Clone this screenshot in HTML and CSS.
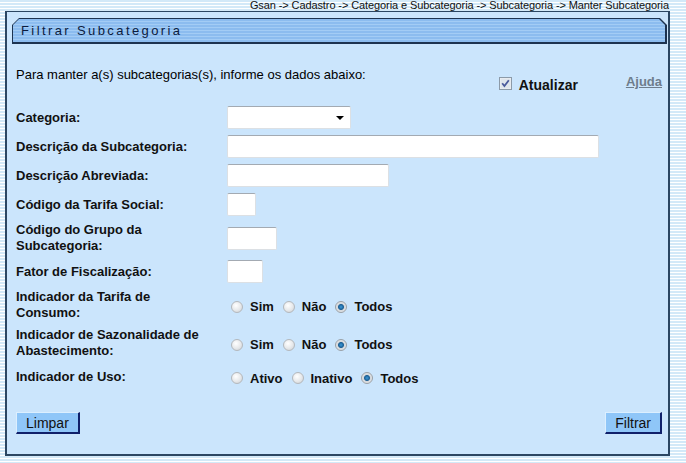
FILE: index.html
```html
<!DOCTYPE html>
<html lang="pt">
<head>
  <meta charset="UTF-8" />
  <title>Filtrar Subcategoria</title>
  <link rel="stylesheet" href="styles.css">
</head>
<body>

  <!-- Caminho -->
  <div class="breadcrumb">Gsan -&gt; Cadastro -&gt; Categoria e Subcategoria -&gt; Subcategoria -&gt; Manter Subcategoria</div>

  <div class="panel">
    <div class="title-bar">
      <div class="title-inner">Filtrar Subcategoria</div>
    </div>

    <div class="intro-row">
      <p class="intro">Para manter a(s) subcategorias(s), informe os dados abaixo:</p>
      <label class="update">
        <svg class="check" width="13" height="13" viewBox="0 0 13 13">
          <rect x="0.5" y="0.5" width="12" height="12" fill="#eef1f5" stroke="#8c9aa8" />
          <rect x="1.5" y="1.5" width="10" height="10" fill="#dfe5ec" />
          <path d="M3.2 6.3 L5.4 9 L9.8 3.2" fill="none" stroke="#4a5a9c" stroke-width="1.8" />
        </svg>
        Atualizar
      </label>
      <a class="help" href="#">Ajuda</a>
    </div>

    <div class="form">
      <label>Categoria:</label>
      <div>
        <span class="select-wrap">
          <select class="field select"><option></option></select>
          <span class="arrow"></span>
        </span>
      </div>

      <label>Descrição da Subcategoria:</label>
      <div><input class="field w-desc" type="text"></div>

      <label>Descrição Abreviada:</label>
      <div><input class="field w-abrev" type="text"></div>

      <label>Código da Tarifa Social:</label>
      <div><input class="field w-tarifa" type="text"></div>

      <label>Código do Grupo da Subcategoria:</label>
      <div><input class="field w-grupo" type="text"></div>

      <label>Fator de Fiscalização:</label>
      <div><input class="field w-fator" type="text"></div>

      <label>Indicador da Tarifa de Consumo:</label>
      <div class="radios">
        <input type="radio" name="tarifa"><span>Sim</span>
        <input type="radio" name="tarifa"><span>Não</span>
        <input type="radio" name="tarifa" checked><span>Todos</span>
      </div>

      <label>Indicador de Sazonalidade de Abastecimento:</label>
      <div class="radios">
        <input type="radio" name="sazonal"><span>Sim</span>
        <input type="radio" name="sazonal"><span>Não</span>
        <input type="radio" name="sazonal" checked><span>Todos</span>
      </div>

      <label>Indicador de Uso:</label>
      <div class="radios">
        <input type="radio" name="uso"><span>Ativo</span>
        <input type="radio" name="uso"><span>Inativo</span>
        <input type="radio" name="uso" checked><span>Todos</span>
      </div>
    </div>

    <div class="buttons">
      <button class="btn" type="button">Limpar</button>
      <button class="btn" type="button">Filtrar</button>
    </div>
  </div>

</body>
</html>
```

FILE: styles.css
```css
* {
  margin: 0;
  padding: 0;
  box-sizing: border-box;
}

body {
  font-family: "Liberation Sans", Arial, sans-serif;
  color: #000;
  background: repeating-linear-gradient(to bottom, #d3e9f8 0, #d3e9f8 2px, #ffffff 2px, #ffffff 3px);
  height: 463px;
  overflow: hidden;
}

.breadcrumb {
  font-family: "Liberation Sans Narrow", "Liberation Sans", Arial, sans-serif;
  font-size: 11px;
  line-height: 11px;
  height: 11px;
  text-align: right;
  padding-right: 17px;
  letter-spacing: -0.1px;
  color: #111;
}

.panel {
  width: 665px;
  height: 445px;
  margin-left: 5px;
  background: #cbe5fc;
  border: 2px solid #2b4662;
  border-top-width: 1px;
  padding: 6px 1px 0 5px;
  display: flex;
  flex-direction: column;
}

/* barra do titulo com cantos cortados */
.title-bar {
  height: 26px;
  background: #1d3350;
  padding: 1px 2px 2px 1px;
  clip-path: polygon(7px 0, calc(100% - 7px) 0, 100% 7px, 100% 100%, 0 100%, 0 7px);
}

.title-inner {
  height: 100%;
  background: repeating-linear-gradient(to bottom, #8cbcef 0, #8cbcef 2px, #a3ccf5 2px, #a3ccf5 3px);
  clip-path: polygon(6px 0, calc(100% - 6px) 0, 100% 6px, 100% 100%, 0 100%, 0 6px);
  font-size: 13px;
  line-height: 23px;
  letter-spacing: 2.4px;
  color: #0b1b3e;
  padding-left: 8px;
}

.intro-row {
  display: flex;
  align-items: flex-start;
  padding: 23px 5px 0 4px;
  height: 62px;
}

.intro {
  flex: 1;
  font-size: 13px;
  line-height: 15px;
}

.update {
  display: flex;
  align-items: center;
  gap: 7px;
  font-size: 14px;
  font-weight: bold;
  margin-top: 10px;
  margin-right: 48px;
  color: #111;
}

.update .check {
  margin-top: -3px;
}

.help {
  font-size: 13px;
  font-weight: bold;
  color: #6e7d8c;
  margin-top: 7px;
}

.form {
  display: grid;
  grid-template-columns: 211px 1fr;
  row-gap: 6px;
  align-items: center;
  padding-left: 4px;
}

.form label {
  font-size: 13px;
  font-weight: bold;
  line-height: 16px;
  color: #111;
  padding-right: 15px;
}

.field {
  height: 23px;
  border: 1px solid #dce0e4;
  border-top-color: #a3aab2;
  border-radius: 2px;
  background: #fff;
  font-family: inherit;
  font-size: 12px;
  display: block;
}

.select-wrap {
  position: relative;
  display: inline-block;
}

.select {
  width: 124px;
  appearance: none;
  -webkit-appearance: none;
}

.arrow {
  position: absolute;
  right: 7px;
  top: 10px;
  border-left: 4px solid transparent;
  border-right: 4px solid transparent;
  border-top: 4px solid #000;
}

.w-desc { width: 372px; }
.w-abrev { width: 162px; }
.w-tarifa { width: 29px; }
.w-grupo { width: 50px; }
.w-fator { width: 36px; }

.radios {
  display: flex;
  align-items: center;
  min-height: 23px;
  font-size: 13px;
  font-weight: bold;
  color: #111;
  padding-left: 4px;
  padding-top: 3px;
}

.radios input {
  appearance: none;
  -webkit-appearance: none;
  width: 12px;
  height: 12px;
  border-radius: 50%;
  border: 1px solid #b4b8bc;
  background: radial-gradient(circle at 40% 35%, #ffffff 0, #e6e8ea 55%, #c9cdd1 100%);
  margin-right: 7px;
}

.radios input:checked {
  background: radial-gradient(circle at 50% 50%, #3c9ad8 0, #1c5f95 2.5px, #d4d8dc 3.5px, #f2f3f4 100%);
  border-color: #9aa0a6;
}

.radios span {
  margin-right: 9px;
}

.buttons {
  display: flex;
  justify-content: space-between;
  padding: 24px 5px 0 4px;
}

.btn {
  height: 22px;
  padding: 0 9px;
  background: #8fc6f8;
  border: 1px solid #dcefff;
  border-right: 2px solid #10206a;
  border-bottom: 2px solid #10206a;
  font-family: inherit;
  font-size: 14px;
  color: #111;
}
```
